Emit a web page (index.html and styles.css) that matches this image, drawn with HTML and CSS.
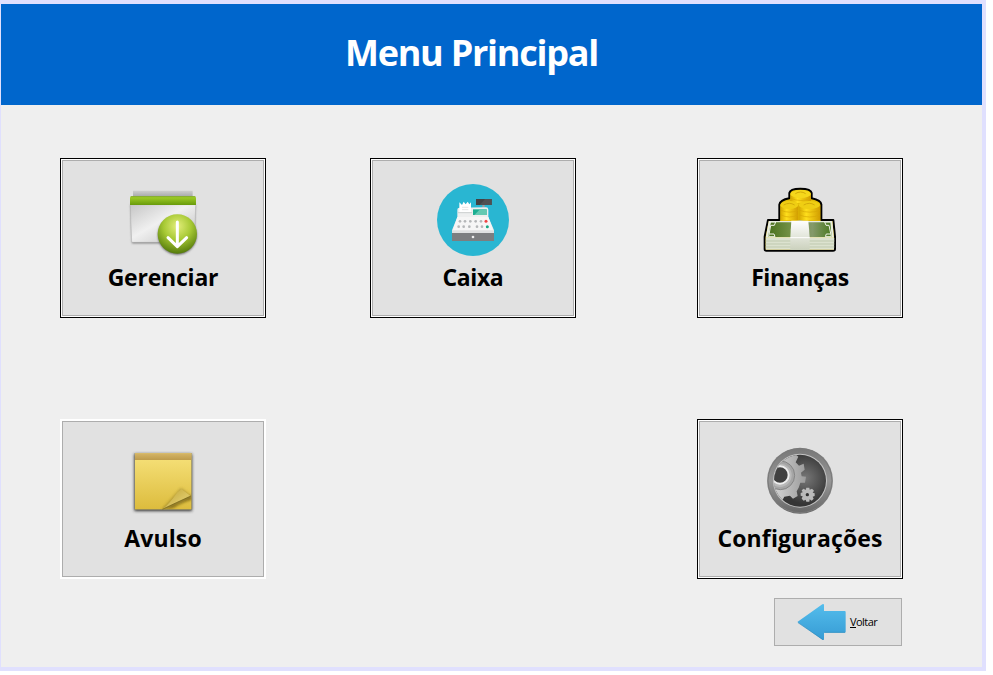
FILE: index.html
```html
<!DOCTYPE html>
<html lang="pt-BR">
<head>
<meta charset="utf-8">
<title>Menu Principal</title>
<link rel="stylesheet" href="styles.css">
</head>
<body>
<div class="window">
  <header class="header"><h1 class="title">Menu Principal</h1></header>
  <main class="menu">
    <button class="tile">
      <svg class="icon" viewBox="39 0 240 240">
        <defs>
          <linearGradient id="panel" x1="0" y1="0" x2="1" y2="1"><stop offset="0" stop-color="#c6c6c6"/><stop offset=".45" stop-color="#f0f0f0"/><stop offset="1" stop-color="#bdbdbd"/></linearGradient>
          <linearGradient id="band" x1="0" y1="0" x2="0" y2="1"><stop offset="0" stop-color="#a5d32a"/><stop offset="1" stop-color="#689a0b"/></linearGradient>
          <linearGradient id="back" x1="0" y1="0" x2="0" y2="1"><stop offset="0" stop-color="#cfcfcf"/><stop offset="1" stop-color="#a6a8a8"/></linearGradient>
          <radialGradient id="ball" cx=".5" cy=".3" r=".7"><stop offset="0" stop-color="#e3ee7b"/><stop offset=".5" stop-color="#a7c934"/><stop offset="1" stop-color="#557b0b"/></radialGradient>
          <filter id="soft"><feGaussianBlur stdDeviation="2.5"/></filter>
        </defs>
        <path d="M69 32H248V50H69z" fill="url(#back)"/>
        <path d="M62 74H256L252 190H66z" fill="#777" filter="url(#soft)"/>
        <path d="M61 74H257L253 184Q253 187 250 187H69Q65 187 65 184z" fill="url(#panel)" stroke="#aaa"/>
        <path d="M60 54Q60 49 65 49H253Q258 49 258 54V75H60z" fill="url(#band)"/>
        <path d="M62 50H256" stroke="#6f991c" stroke-width="2"/>
        <circle cx="202" cy="166" r="58" fill="#666" filter="url(#soft)"/>
        <circle cx="202" cy="162" r="59" fill="url(#ball)"/>
        <path d="M202 126V199M174 173L202 200L230 173" fill="none" stroke="#fff" stroke-width="9" stroke-linecap="round" stroke-linejoin="round"/>
      </svg>
      <span class="label gerenciar">Gerenciar</span>
    </button>
    <button class="tile">
      <svg class="icon" viewBox="39 15 240 240">
        <circle cx="159" cy="135" r="108" fill="#29b6d2"/>
        <path d="M187 88H194V98H187z" fill="#9aa0a2"/>
        <path d="M168 72H215V90H168z" fill="#424244"/><path d="M195 72H215V90H179z" fill="#505052"/>
        <path d="M118 98Q112 98 112 104V126L96 166V174H222V166L205 126V104Q205 97 198 97z" fill="#eeefef"/>
        <path d="M112 126H205L222 174H96z" fill="#f6f6f6"/>
        <path d="M118 112V82L126 90L131 80L137 88L143 80L148 88L153 82V112z" fill="#fff"/>
        <path d="M126 97H145M126 104H145" stroke="#d7dada" stroke-width="2"/>
        <path d="M114 113H156" stroke="#ccd0d0" stroke-width="3"/>
        <path d="M159 103H200V120H159z" fill="#1aae91"/><path d="M180 103H200V120H163z" fill="#63c9b2"/>
        <g fill="#b5b7b9"><circle cx="120" cy="139" r="4"/><circle cx="135" cy="139" r="4"/><circle cx="151" cy="139" r="4"/><circle cx="167" cy="139" r="4"/><circle cx="183" cy="139" r="4"/><circle cx="116" cy="155" r="4"/><circle cx="131" cy="155" r="4"/><circle cx="148" cy="155" r="4"/><circle cx="171" cy="155" r="4"/><circle cx="186" cy="155" r="4"/></g>
        <circle cx="198" cy="139" r="4.500" fill="#ef4545"/><circle cx="202" cy="155" r="4.500" fill="#18a783"/>
        <path d="M96 166H222V174H96z" fill="#dfe1e1"/><path d="M96 174H222V198H96z" fill="#7c7e80"/>
        <circle cx="159" cy="186" r="4" fill="#eee"/>
      </svg>
      <span class="label caixa">Caixa</span>
    </button>
    <button class="tile">
      <svg class="icon" viewBox="45 15 240 240">
        <defs>
          <linearGradient id="gold"><stop offset="0" stop-color="#d3a600"/><stop offset=".35" stop-color="#ffdf1c"/><stop offset="1" stop-color="#d09c00"/></linearGradient>
          <linearGradient id="note"><stop offset="0" stop-color="#49701d"/><stop offset=".4" stop-color="#79964b"/><stop offset=".7" stop-color="#83996a"/><stop offset="1" stop-color="#4b7920"/></linearGradient>
          <linearGradient id="strap" x1="0" y1="0" x2="0" y2="1"><stop offset="0" stop-color="#fff"/><stop offset="1" stop-color="#cbd1bd"/></linearGradient>
        </defs>
        <path d="M133 70V54Q135 41 166 41Q198 41 200 54V70Q228 76 229 88V135H265L270 185V222Q270 227 264 227H64Q59 227 59 222V185L69 135H103V89Q105 75 133 70z" fill="#e3bd08" stroke="#000" stroke-width="6" stroke-linejoin="round"/>
        <path d="M136 58V84H198V58z" fill="url(#gold)"/><ellipse cx="167" cy="57" rx="31" ry="12" fill="#f5d71b"/>
        <path d="M106 90V136H160V90z" fill="url(#gold)"/><ellipse cx="133" cy="90" rx="27" ry="12" fill="#efce13"/>
        <path d="M161 90V136H226V90z" fill="url(#gold)"/><ellipse cx="193" cy="90" rx="32" ry="12" fill="#efce13"/>
        <path d="M151 56Q167 46 182 56M116 90Q133 80 149 90M176 90Q193 80 209 90" fill="none" stroke="#d4ab0a" stroke-width="3"/>
        <path d="M138 70Q167 83 197 70M108 106Q133 117 159 106M163 106Q194 117 225 106M108 120Q133 132 159 120M163 120Q194 132 225 120" fill="none" stroke="#d6a805" stroke-width="2"/>
        <path d="M71 138H262L267 188H62z" fill="#e8ecdf"/><path d="M78 142H256L260 186H69z" fill="url(#note)"/>
        <path d="M73 141H92L88 151H77L71 185H90L87 177H73M257 141H239L243 151H252L259 185H241L244 177H257" fill="none" stroke="#eff2e7" stroke-width="3"/>
        <path d="M62 188H268L267 224H62z" fill="#dce2cf"/><path d="M62 198H268M62 207H268M62 216H268" stroke="#bac4a8" stroke-width="2.500"/>
        <circle cx="165" cy="164" r="28" fill="#a5b38e"/>
        <path d="M139 137H190L194 187V225H136V187z" fill="url(#strap)"/><path d="M136 188H194" stroke="#fff" stroke-width="3"/>
      </svg>
      <span class="label financas">Finanças</span>
    </button>
    <button class="tile focused">
      <svg class="icon" viewBox="39 3 240 240">
        <defs>
          <linearGradient id="paper" x1="0" y1="0" x2="0" y2="1"><stop offset="0" stop-color="#f7e27b"/><stop offset="1" stop-color="#dcbc3d"/></linearGradient>
          <linearGradient id="gum" x1="0" y1="0" x2="0" y2="1"><stop offset="0" stop-color="#d5b567"/><stop offset="1" stop-color="#bd9b4b"/></linearGradient>
          <linearGradient id="fold" x1="0" y1="0" x2="1" y2="1"><stop offset=".3" stop-color="#cdb34a"/><stop offset=".6" stop-color="#dbc563"/><stop offset="1" stop-color="#a38c33"/></linearGradient>
          <filter id="shade" x="-20%" y="-20%" width="140%" height="140%"><feGaussianBlur stdDeviation="4"/></filter>
          <clipPath id="sheet"><path d="M75 40H244V208H75z"/></clipPath>
        </defs>
        <path d="M73 42H246V213H73z" fill="#333" filter="url(#shade)"/>
        <path d="M74 39H245V209H74z" fill="#8e8866"/>
        <path d="M75 40H244V208H75z" fill="url(#paper)"/><path d="M75 40H244V60H75z" fill="url(#gum)"/>
        <g clip-path="url(#sheet)"><path d="M155 210L213 145L246 170z" fill="#8e7822" filter="url(#shade)" opacity=".65"/><path d="M155 209L246 167V178Q212 188 190 203z" fill="#67550f" filter="url(#shade)" opacity=".85"/></g>
        <path d="M157 208Q181 188 201 158L214 147L242 168Q200 187 157 208z" fill="url(#fold)"/>
        <path d="M157 208Q200 187 243 168" fill="none" stroke="#6d5d1a" stroke-width="2"/>
      </svg>
      <span class="label avulso">Avulso</span>
    </button>
    <button class="tile settings">
      <svg class="icon" viewBox="45 3 240 240">
        <defs>
          <linearGradient id="rim" x1="0" y1="0" x2="0" y2="1"><stop offset="0" stop-color="#777"/><stop offset=".5" stop-color="#969696"/><stop offset="1" stop-color="#666"/></linearGradient>
          <radialGradient id="well" cx=".6" cy=".45" r=".5"><stop offset="0" stop-color="#777"/><stop offset="1" stop-color="#353535"/></radialGradient>
          <linearGradient id="metal"><stop offset="0" stop-color="#ddd"/><stop offset="1" stop-color="#9b9b9b"/></linearGradient>
          <clipPath id="face"><circle cx="165" cy="122" r="78"/></clipPath>
        </defs>
        <circle cx="165" cy="122" r="99" fill="url(#rim)"/><circle cx="165" cy="122" r="96" fill="none" stroke="#7a7a7a" stroke-width="3"/>
        <circle cx="165" cy="122" r="81" fill="#c3c3c3"/><circle cx="165" cy="122" r="78" fill="url(#well)"/>
        <g clip-path="url(#face)">
          <path d="M80 40L151 43L160 50L152 67L162 77L176 71L179 89L168 98L170 109L183 110L180 128L166 128L161 143L155 154L158 168L144 176L135 167L118 170L109 186L70 170z" fill="url(#metal)"/>
          <circle cx="106" cy="106" r="43" fill="#a5a5a5" stroke="#858585" stroke-width="3"/><circle cx="105" cy="106" r="35" fill="#b9b9b9"/><circle cx="105" cy="105" r="26" fill="#414141" stroke="#eee" stroke-width="6"/>
        </g>
        <path d="M184 143H193L194 149L201 146L207 152L203 158L209 160V168L203 170L206 176L200 182L194 178L193 185H184L182 179L176 182L170 176L173 169L167 167V159L173 157L170 151L176 146L182 150z" fill="#bbb"/>
        <circle cx="187" cy="164" r="5" fill="#333"/>
      </svg>
      <span class="label config">Configurações</span>
    </button>
  </main>
  <footer class="footer">
    <button class="back">
      <svg class="arrow" viewBox="97 42 147 108">
        <defs><linearGradient id="sky" x1="0" y1="0" x2="0" y2="1"><stop offset="0" stop-color="#54bdec"/><stop offset="1" stop-color="#369bd4"/></linearGradient></defs>
        <path d="M98 96L173 43Q178 40 178 46V63H240Q243 63 243 66V125Q243 128 240 128H178V147Q178 152 173 149z" fill="url(#sky)"/>
        <path d="M179 127H241M100 98L175 149" stroke="#338ebd" stroke-width="2"/>
      </svg>
      <span class="back-label"><u>V</u>oltar</span>
    </button>
  </footer>
</div>
</body>
</html>
```
FILE: styles.css
```css
* { box-sizing: border-box; }
body { margin: 0; background: #fff; font-family: "Open Sans", "Noto Sans", sans-serif; }
.window {
  width: 986px; height: 671px;
  border: solid #e0e0fe; border-width: 4px 4px 4px 1px;
  background: #efefef;
}
.header { height: 101px; background: #06c; padding-right: 40px; display: flex; align-items: center; justify-content: center; }
.title { margin: 0; color: #fff; font-size: 36px; line-height: 50px; font-weight: 700; letter-spacing: -1.25px; white-space: nowrap; padding-bottom: 4px; }
.menu { display: grid; grid-template-columns: 310px 327px 206px; grid-auto-rows: 160px; row-gap: 101px; padding: 53px 0 0 59px; }
button { font-family: inherit; margin: 0; color: #000; border-radius: 0; }
.tile {
  width: 206px; height: 160px; padding: 19px 0 0;
  border: 1px solid #000; outline: 1px solid #adadad; outline-offset: -3px;
  background: #e1e1e1; box-shadow: inset 0 0 0 1px #fff;
  display: flex; flex-direction: column; align-items: center; justify-content: flex-start;
}
.tile.focused { border-color: #fff; }
.settings { grid-column: 3; }
.icon { width: 80px; height: 80px; flex: none; margin-top: 2px; }
.label { font-size: 23px; line-height: 32px; font-weight: 700; white-space: nowrap; margin-top: 1px; }
.gerenciar { letter-spacing: -.22px; }
.caixa { letter-spacing: -.4px; }
.financas { letter-spacing: -.4px; }
.avulso { letter-spacing: .15px; }
.config { letter-spacing: .12px; }
.footer { display: flex; justify-content: flex-end; padding: 19px 80px 0 0; }
.back { width: 128px; height: 48px; padding: 0 0 0 22px; border: 1px solid #adadad; background: #e1e1e1; display: flex; align-items: center; gap: 4px; }
.arrow { width: 49px; height: 36px; flex: none; }
.back-label { font-size: 11px; letter-spacing: -.55px; padding-bottom: 2px; }
```
